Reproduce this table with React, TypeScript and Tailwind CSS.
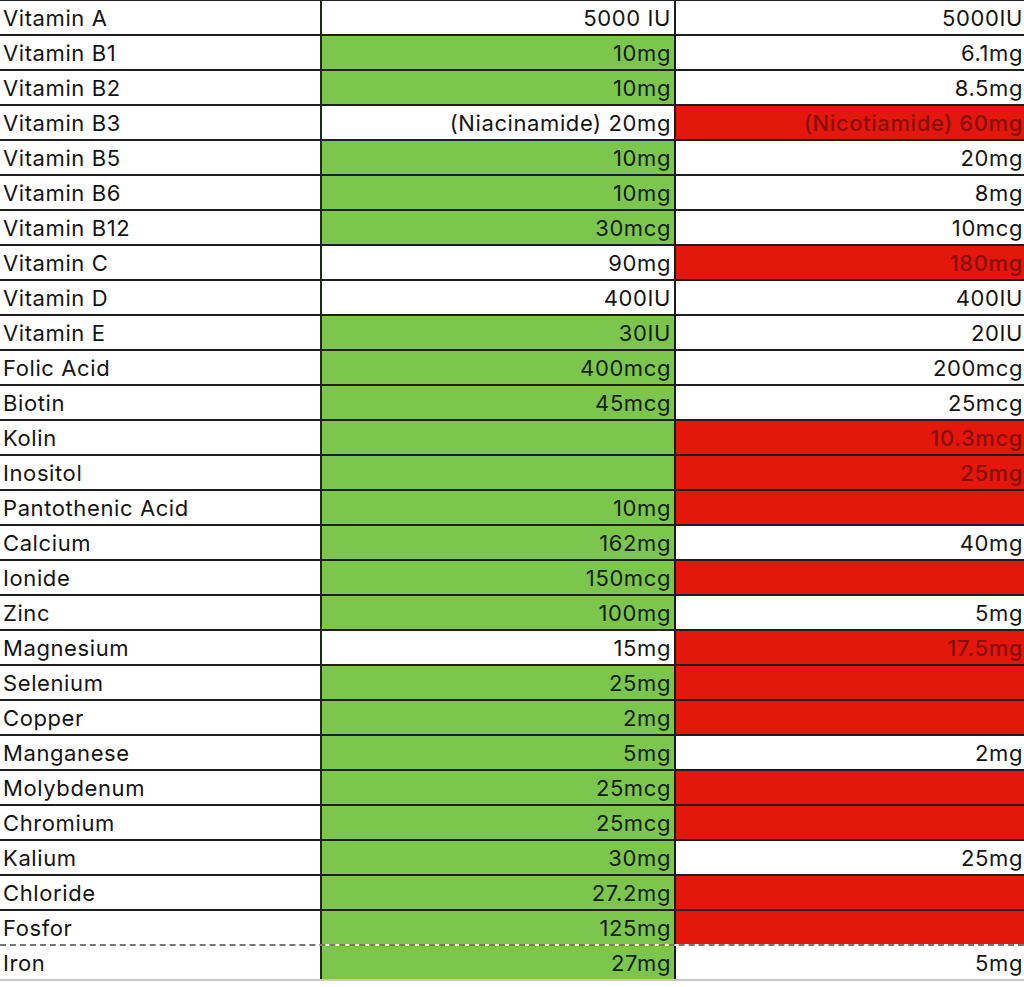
import React from "react";

type C = "w" | "g" | "r";
const rows: [string, string, C, string, C][] = [
  ["Vitamin A", "5000 IU", "w", "5000IU", "w"],
  ["Vitamin B1", "10mg", "g", "6.1mg", "w"],
  ["Vitamin B2", "10mg", "g", "8.5mg", "w"],
  ["Vitamin B3", "(Niacinamide) 20mg", "w", "(Nicotiamide) 60mg", "r"],
  ["Vitamin B5", "10mg", "g", "20mg", "w"],
  ["Vitamin B6", "10mg", "g", "8mg", "w"],
  ["Vitamin B12", "30mcg", "g", "10mcg", "w"],
  ["Vitamin C", "90mg", "w", "180mg", "r"],
  ["Vitamin D", "400IU", "w", "400IU", "w"],
  ["Vitamin E", "30IU", "g", "20IU", "w"],
  ["Folic Acid", "400mcg", "g", "200mcg", "w"],
  ["Biotin", "45mcg", "g", "25mcg", "w"],
  ["Kolin", "", "g", "10.3mcg", "r"],
  ["Inositol", "", "g", "25mg", "r"],
  ["Pantothenic Acid", "10mg", "g", "", "r"],
  ["Calcium", "162mg", "g", "40mg", "w"],
  ["Ionide", "150mcg", "g", "", "r"],
  ["Zinc", "100mg", "g", "5mg", "w"],
  ["Magnesium", "15mg", "w", "17.5mg", "r"],
  ["Selenium", "25mg", "g", "", "r"],
  ["Copper", "2mg", "g", "", "r"],
  ["Manganese", "5mg", "g", "2mg", "w"],
  ["Molybdenum", "25mcg", "g", "", "r"],
  ["Chromium", "25mcg", "g", "", "r"],
  ["Kalium", "30mg", "g", "25mg", "w"],
  ["Chloride", "27.2mg", "g", "", "r"],
  ["Fosfor", "125mg", "g", "", "r"],
  ["Iron", "27mg", "g", "5mg", "w"],
];

function cellCls(c: C) {
  if (c === "g") return "bg-[#7dc64e] text-[#13200b]";
  if (c === "r") return "bg-[#e3170c] text-[#8a0f08] font-medium";
  return "bg-white text-[#141414]";
}

export default function App() {
  return (
    <div
      className="w-[1024px] h-[987px] bg-white overflow-hidden"
      style={{ fontFamily: "Inter, 'Open Sans', sans-serif" }}
    >
      <div className="border-t border-[#222]">
        {rows.map(([name, a, ac, b, bc], i) => {
          const last = i === rows.length - 1;
          const beforeLast = i === rows.length - 2;
          const border = last
            ? "border-b-2 border-[#c8c8c8]"
            : beforeLast
            ? "border-b-2 border-dashed border-[#777]"
            : "border-b-2 border-[#1e1e1e]";
          return (
            <div key={i} className={`flex h-[35px] text-[22px] leading-none tracking-[0.6px] ${border}`}>
              <div className="w-[320px] flex items-center pl-[3px] pt-[1px] bg-white text-[#141414]">
                {name}
              </div>
              <div className="w-[2px] bg-[#1c2a14]" />
              <div className={`w-[352px] flex items-center justify-end pr-[3px] pt-[1px] ${cellCls(ac)}`}>
                {a}
              </div>
              <div className="w-[2px] bg-[#1a1a1a]" />
              <div className={`flex-1 flex items-center justify-end pr-[1px] pt-[1px] ${cellCls(bc)}`}>
                {b}
              </div>
            </div>
          );
        })}
      </div>
    </div>
  );
}
